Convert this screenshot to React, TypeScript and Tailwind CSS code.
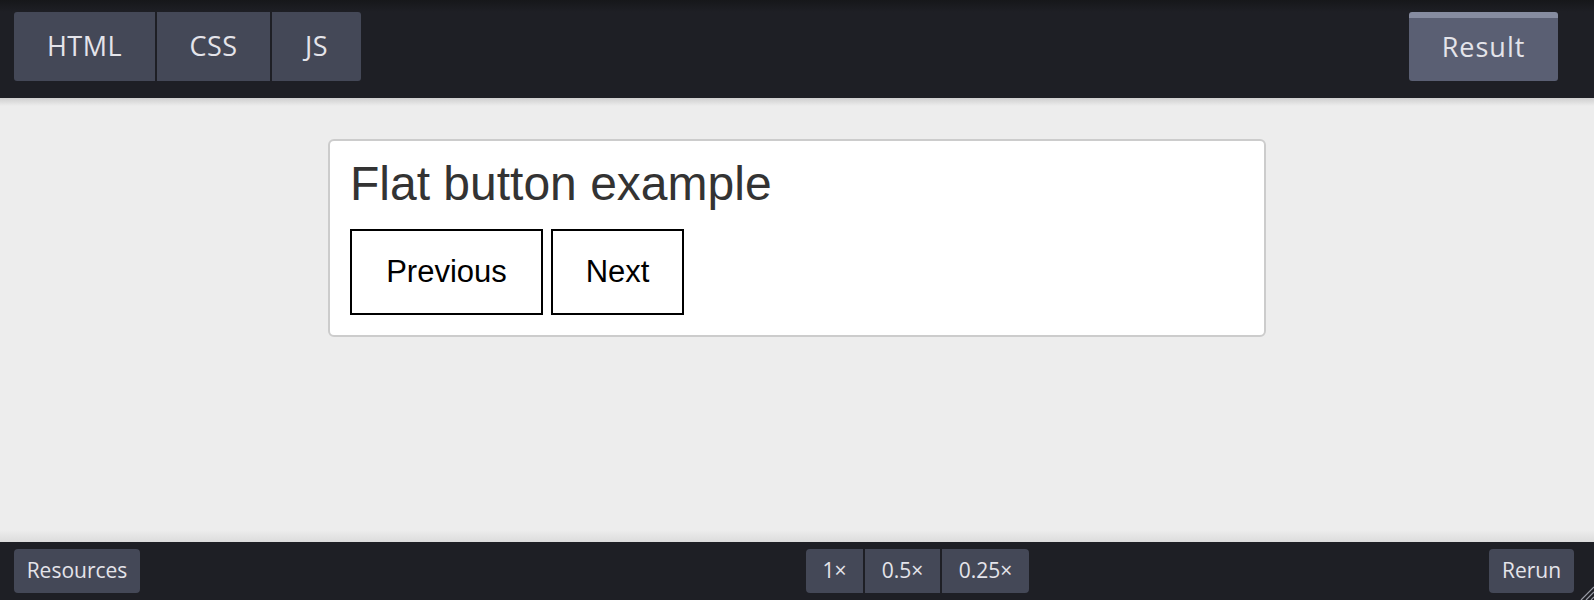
import React from "react";

export default function App() {
  const ui = { fontFamily: '"Open Sans", "DejaVu Sans", sans-serif' };
  const arial = { fontFamily: '"Liberation Sans", Arial, sans-serif' };
  return (
    <div className="w-[1594px] h-[600px] flex flex-col bg-[#ededed] overflow-hidden font-medium" style={ui}>
      {/* top bar */}
      <div className="h-[98px] shrink-0 flex items-start justify-between px-[14px] pt-[12px] bg-[linear-gradient(to_bottom,#16171a,#1e1f25_12px,#1e1f25)]">
        <div className="flex gap-[2px]">
          <div className="w-[141px] h-[69px] flex items-center justify-center bg-[#444857] rounded-l-[3px] text-[27px] text-[#e4e4ea] tracking-[0.5px]">HTML</div>
          <div className="w-[113px] h-[69px] flex items-center justify-center bg-[#444857] text-[27px] text-[#e4e4ea] tracking-[0.5px]">CSS</div>
          <div className="w-[89px] h-[69px] flex items-center justify-center bg-[#444857] rounded-r-[3px] text-[27px] text-[#e4e4ea] tracking-[0.5px]">JS</div>
        </div>
        <div className="mr-[22px] w-[149px] h-[69px] flex items-center justify-center bg-[#5a5f73] border-t-[6px] border-[#868ca0] rounded-[3px] text-[27px] text-[#e4e4ea] tracking-[1px] pb-[4px]">Result</div>
      </div>
      {/* main */}
      <div className="flex-1 relative flex flex-col items-center bg-[linear-gradient(to_bottom,#cfcfcf,#ededed_8px,#ededed_calc(100%-12px),#dcdcdc)]">
        <div className="mt-[41px] w-[938px] bg-white border-2 border-[#cccccc] rounded-[6px] pt-[15px] px-[20px] pb-[20px] font-normal" style={arial}>
          <h1 className="text-[48px] leading-[55px] text-[#333333] mb-[18px]">Flat button example</h1>
          <div className="flex gap-[8px]">
            <button className="w-[193px] h-[86px] border-2 border-black bg-white text-black text-[31px] flex items-center justify-center" style={arial}>Previous</button>
            <button className="w-[133px] h-[86px] border-2 border-black bg-white text-black text-[31px] flex items-center justify-center" style={arial}>Next</button>
          </div>
        </div>
      </div>
      {/* bottom bar */}
      <div className="h-[58px] shrink-0 relative flex items-center px-[14px] bg-[#1e1f25]">
        <div className="w-[126px] h-[44px] flex items-center justify-center bg-[#444857] rounded-[4px] text-[21px] text-[#e4e4ea]">Resources</div>
        <div className="ml-[666px] flex gap-[2px]">
          <div className="w-[57px] h-[44px] flex items-center justify-center bg-[#444857] rounded-l-[4px] text-[21px] text-[#e4e4ea]">1×</div>
          <div className="w-[75px] h-[44px] flex items-center justify-center bg-[#444857] text-[21px] text-[#e4e4ea]">0.5×</div>
          <div className="w-[87px] h-[44px] flex items-center justify-center bg-[#444857] rounded-r-[4px] text-[21px] text-[#e4e4ea]">0.25×</div>
        </div>
        <div className="ml-auto mr-[6px] w-[85px] h-[44px] flex items-center justify-center bg-[#444857] rounded-[4px] text-[21px] text-[#e4e4ea]">Rerun</div>
        <svg className="absolute right-0 bottom-0" width="14" height="14" viewBox="0 0 14 14">
          <path d="M14 1 L1 14 M14 6 L6 14 M14 11 L11 14" stroke="#9a9ca6" strokeWidth="1.2" />
        </svg>
      </div>
    </div>
  );
}
